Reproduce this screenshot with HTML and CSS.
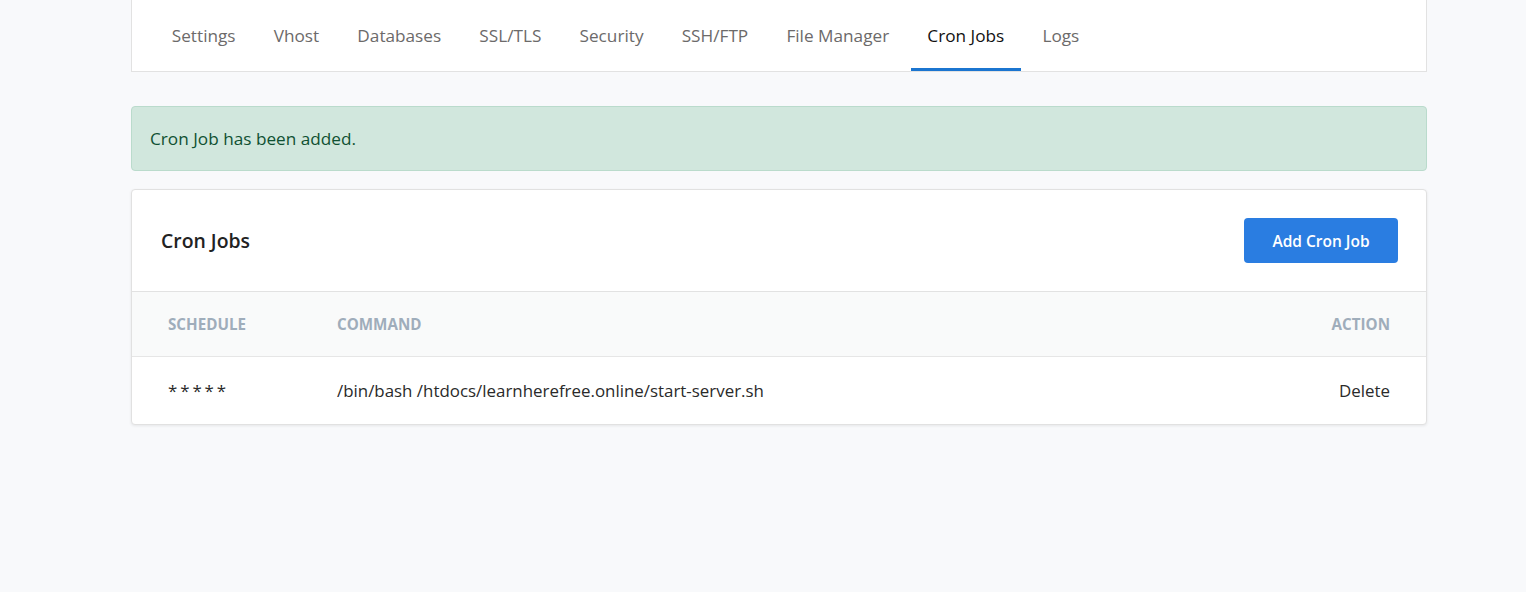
FILE: index.html
```html
<!DOCTYPE html>
<html lang="en">
<head>
<meta charset="utf-8">
<title>Cron Jobs</title>
<link rel="stylesheet" href="styles.css">
</head>
<body>
<div class="page">
  <nav class="tabs">
    <a class="tab">Settings</a>
    <a class="tab">Vhost</a>
    <a class="tab">Databases</a>
    <a class="tab">SSL/TLS</a>
    <a class="tab">Security</a>
    <a class="tab">SSH/FTP</a>
    <a class="tab">File Manager</a>
    <a class="tab active">Cron Jobs</a>
    <a class="tab">Logs</a>
  </nav>

  <div class="alert">Cron Job has been added.</div>

  <section class="card">
    <header class="card-head">
      <h2 class="card-title">Cron Jobs</h2>
      <button class="btn">Add Cron Job</button>
    </header>
    <div class="table">
      <div class="row head">
        <div class="cell">Schedule</div>
        <div class="cell">Command</div>
        <div class="cell right">Action</div>
      </div>
      <div class="row">
        <div class="cell schedule">* * * * *</div>
        <div class="cell">/bin/bash /htdocs/learnherefree.online/start-server.sh</div>
        <div class="cell right">Delete</div>
      </div>
    </div>
  </section>
</div>
</body>
</html>
```

FILE: styles.css
```css
* { box-sizing: border-box; }
html, body { margin: 0; padding: 0; }
body {
  background: #f8f9fb;
  font-family: "Open Sans", "Noto Sans", sans-serif;
  color: #212529;
  width: 1526px;
  height: 592px;
  overflow: hidden;
}
.page {
  width: 1296px;
  margin: 0 0 0 131px;
}
.tabs {
  display: flex;
  gap: 4.6px;
  background: #fff;
  border: 1px solid #e2e2e2;
  border-top: none;
  height: 72px;
  padding: 0 0 0 23px;
}
.tab {
  display: flex;
  align-items: center;
  padding: 3px 16.8px 0;
  font-size: 17.2px;
  color: #6c6a6a;
  border-bottom: 3px solid transparent;
  cursor: pointer;
}
.tab.active {
  color: #111;
  border-bottom-color: #1b75d0;
}
.alert {
  margin-top: 34px;
  height: 65px;
  display: flex;
  align-items: center;
  padding: 0 18px;
  background: #d1e7dd;
  border: 1px solid #badbcc;
  border-radius: 4px;
  color: #0f5132;
  font-size: 17.2px;
}
.card {
  margin-top: 18px;
  background: #fff;
  border: 1px solid #e1e1e1;
  border-radius: 4px;
  box-shadow: 0 1px 3px rgba(0,0,0,0.08);
}
.card-head {
  display: flex;
  align-items: center;
  justify-content: space-between;
  height: 102px;
  padding: 0 28px 0 29px;
  border-bottom: 1px solid #e2e2e2;
}
.card-title {
  margin: 0;
  font-size: 19.4px;
  font-weight: 600;
  color: #222;
}
.btn {
  width: 154px;
  height: 45px;
  border: none;
  border-radius: 4px;
  background: #2a7de1;
  color: #fff;
  font-family: inherit;
  font-size: 15.5px;
  font-weight: 600;
}
.row {
  display: grid;
  grid-template-columns: 169px 1fr auto;
  align-items: center;
}
.row.head {
  height: 65px;
  background: #f9fafa;
  border-bottom: 1px solid #e6e6e6;
}
.row:not(.head) { height: 67px; }
.cell {
  padding: 0 36px;
  font-size: 16.9px;
  color: #2a2a2a;
}
.cell.schedule { letter-spacing: -0.75px; }
.row.head .cell {
  font-size: 15.2px;
  font-weight: 700;
  text-transform: uppercase;
  color: #9fadbb;
}
.right { text-align: right; }
```
